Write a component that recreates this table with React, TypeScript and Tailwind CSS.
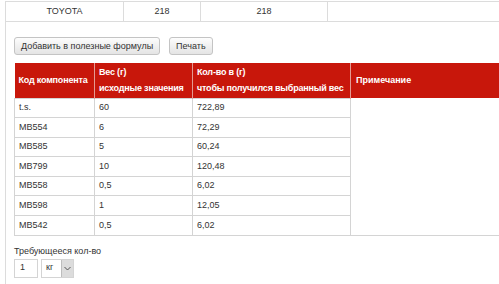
import React from "react";

type Row = { code: string; weight: string; qty: string };

const rows: Row[] = [
  { code: "t.s.", weight: "60", qty: "722,89" },
  { code: "MB554", weight: "6", qty: "72,29" },
  { code: "MB585", weight: "5", qty: "60,24" },
  { code: "MB799", weight: "10", qty: "120,48" },
  { code: "MB558", weight: "0,5", qty: "6,02" },
  { code: "MB598", weight: "1", qty: "12,05" },
  { code: "MB542", weight: "0,5", qty: "6,02" },
];

const font = { fontFamily: '"Liberation Sans", Arial, sans-serif' };

function Button({ children }: { children: React.ReactNode }) {
  return (
    <button className="h-[18px] px-[6px] rounded-[3px] border border-[#c4c4c4] bg-gradient-to-b from-[#fdfdfd] to-[#e4e4e4] text-[9px] leading-none text-[#333] whitespace-nowrap">
      {children}
    </button>
  );
}

export default function App() {
  return (
    <div className="w-[499px] h-[284px] overflow-hidden bg-white text-[#333]" style={font}>
      <div className="ml-[5px] h-full border-l border-[#dcdcdc]">
        {/* summary row */}
        <div className="mt-px flex h-[21px] border-y border-[#dcdcdc] text-[9px]">
          <div className="w-[118px] flex items-center justify-center border-r border-[#dcdcdc]">TOYOTA</div>
          <div className="w-[77px] flex items-center justify-center border-r border-[#dcdcdc]">218</div>
          <div className="w-[127px] flex items-center justify-center border-r border-[#dcdcdc]">218</div>
          <div className="flex-1" />
        </div>

        <div className="pl-[8px]">
          <div className="mt-[15px] flex gap-[9px]">
            <Button>Добавить в полезные формулы</Button>
            <Button>Печать</Button>
          </div>

          <table className="mt-[8px] w-[560px] table-fixed border-collapse text-[9px] whitespace-nowrap">
            <colgroup>
              <col className="w-[80px]" />
              <col className="w-[98px]" />
              <col className="w-[158px]" />
              <col />
            </colgroup>
            <thead>
              <tr className="h-[35px] bg-[#c8170b] text-white text-left">
                <th className="p-0 pl-[4px] align-middle font-bold tracking-[-0.2px] border-r border-[#e49a92] overflow-hidden">Код компонента</th>
                <th className="p-0 pl-[4px] align-middle font-bold tracking-[-0.2px] leading-[16px] border-r border-[#e49a92] overflow-hidden">
                  Вес (г)
                  <br />
                  исходные значения
                </th>
                <th className="p-0 pl-[4px] align-middle font-bold tracking-[-0.2px] leading-[16px] border-r border-[#e49a92] overflow-hidden">
                  Кол-во в (г)
                  <br />
                  чтобы получился выбранный вес
                </th>
                <th className="p-0 pl-[5px] align-middle font-bold">Примечание</th>
              </tr>
            </thead>
            <tbody>
              {rows.map((r, i) => (
                <tr key={r.code + i} className="h-[19.6px]">
                  <td className="p-0 pl-[4px] border border-[#d4d4d4]">{r.code}</td>
                  <td className="p-0 pl-[4px] border border-[#d4d4d4]">{r.weight}</td>
                  <td className="p-0 pl-[4px] border border-[#d4d4d4]">{r.qty}</td>
                  {i === 0 && <td rowSpan={rows.length} className="border-l border-b border-[#d4d4d4]" />}
                </tr>
              ))}
            </tbody>
          </table>

          <div className="mt-[9px] text-[9px] leading-[12px]">Требующееся кол-во</div>
          <div className="mt-[2px] flex gap-[3px]">
            <div className="w-[24px] h-[19px] border border-[#d4d4d4] flex items-center pl-[5px] text-[9px]">1</div>
            <div className="w-[33px] h-[19px] border border-[#d4d4d4] flex text-[9px]">
              <div className="flex-1 flex items-center pl-[4px]">кг</div>
              <div className="w-[12px] h-full bg-[#dcdcdc] border-l border-[#bdbdbd] flex items-center justify-center">
                <svg width="7" height="5" viewBox="0 0 7 5">
                  <path d="M0.5 1 L3.5 4 L6.5 1" fill="none" stroke="#555" strokeWidth="1" />
                </svg>
              </div>
            </div>
          </div>
        </div>
      </div>
    </div>
  );
}
